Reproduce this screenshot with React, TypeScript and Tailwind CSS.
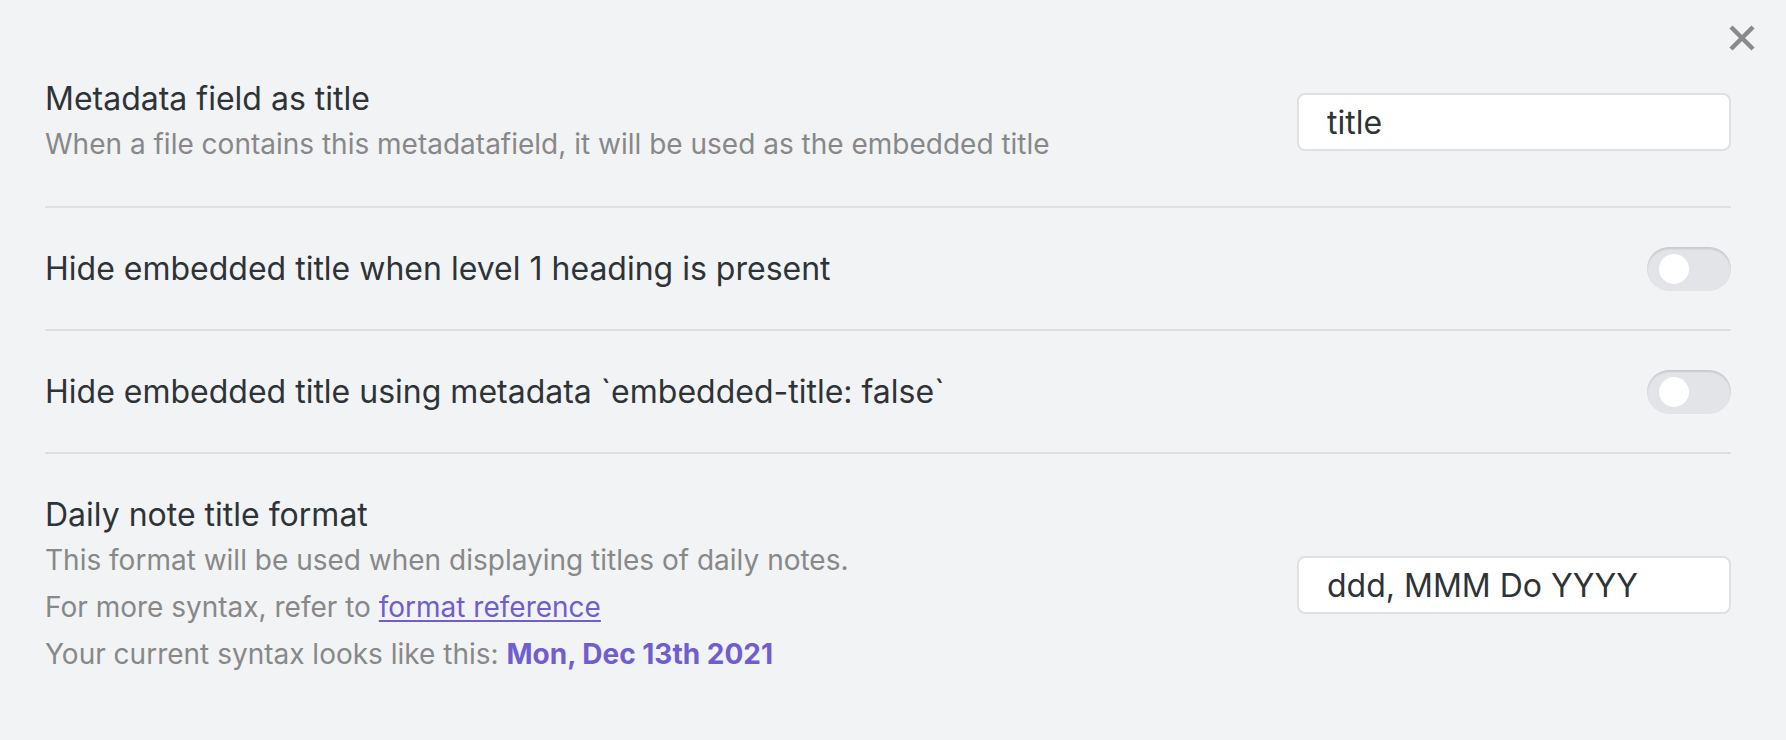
import React from 'react';

const Toggle = () => (
  <div className="relative h-[44px] w-[84px] shrink-0 rounded-full bg-[#e3e4e8] shadow-[inset_0_2px_2px_rgba(0,0,0,0.12)]">
    <div className="absolute left-[12px] top-[7px] h-[30px] w-[30px] rounded-full bg-white" />
  </div>
);

const TextInput = ({ value }: { value: string }) => (
  <input
    type="text"
    defaultValue={value}
    className="h-[58px] w-[434px] shrink-0 rounded-[8px] border-2 border-[#e0e0e0] bg-white pl-[28px] text-[32px] text-[#2e3338] outline-none"
  />
);

const Row = ({ children, first }: { children: React.ReactNode; first?: boolean }) => (
  <div className={`flex items-center justify-between gap-8 py-[38px] ${first ? '' : 'border-t-2 border-[#dedfe2]'}`}>
    {children}
  </div>
);

export default function App() {
  return (
    <div
      className="relative min-h-[740px] w-full bg-[#f2f3f5] pl-[45px] pr-[55px] pt-[38px]"
      style={{ fontFamily: 'Inter, "Noto Sans", sans-serif' }}
    >
      <button className="absolute right-[30px] top-[24px] flex h-[28px] w-[28px] items-center justify-center text-[#8a8a8a]">
        <svg width="28" height="28" viewBox="0 0 28 28" fill="none">
          <path d="M3 3L25 25M25 3L3 25" stroke="currentColor" strokeWidth="4.5" />
        </svg>
      </button>

      <Row first>
        <div className="flex flex-col">
          <div className="text-[32px] leading-[45px] text-[#2e3338]">Metadata field as title</div>
          <div className="text-[28px] leading-[47px] text-[#888888]">
            When a file contains this metadatafield, it will be used as the embedded title
          </div>
        </div>
        <TextInput value="title" />
      </Row>

      <Row>
        <div className="text-[32px] leading-[45px] text-[#2e3338]">Hide embedded title when level 1 heading is present</div>
        <Toggle />
      </Row>

      <Row>
        <div className="text-[32px] leading-[45px] text-[#2e3338]">Hide embedded title using metadata `embedded-title: false`</div>
        <Toggle />
      </Row>

      <Row>
        <div className="flex flex-col">
          <div className="text-[32px] leading-[45px] text-[#2e3338]">Daily note title format</div>
          <div className="text-[28px] leading-[47px] text-[#888888]">
            <div>This format will be used when displaying titles of daily notes.</div>
            <div>
              For more syntax, refer to{' '}
              <a href="#" className="text-[#705dcf] underline underline-offset-[3px]">format reference</a>
            </div>
            <div>
              Your current syntax looks like this: <b className="font-bold text-[#705dcf]">Mon, Dec 13th 2021</b>
            </div>
          </div>
        </div>
        <TextInput value="ddd, MMM Do YYYY" />
      </Row>
    </div>
  );
}
